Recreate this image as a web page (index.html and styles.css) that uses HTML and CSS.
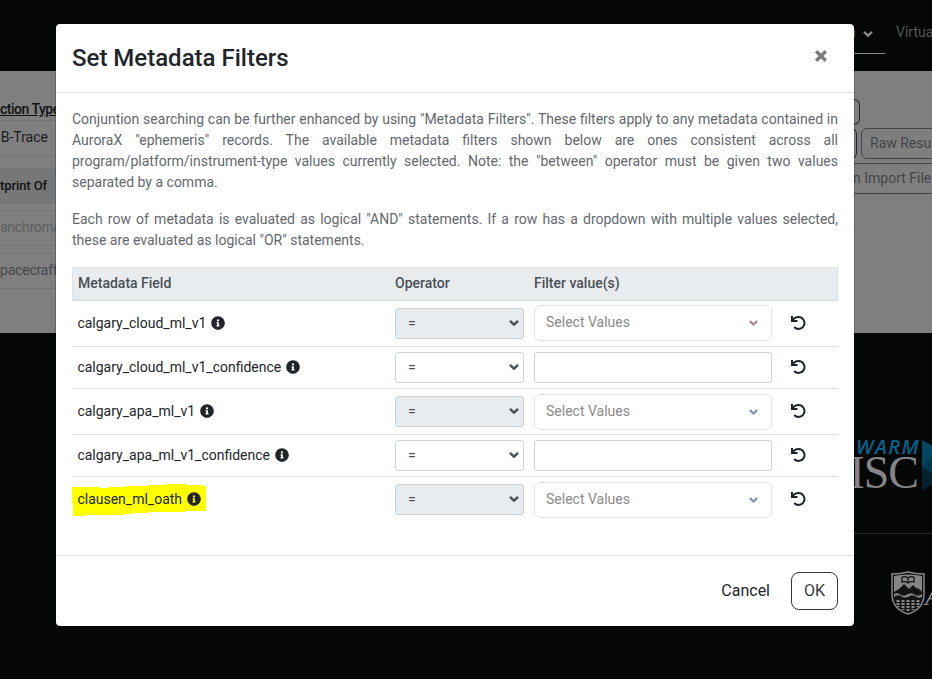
FILE: index.html
```html
<!DOCTYPE html>
<html lang="en">
<head>
<meta charset="utf-8">
<title>Set Metadata Filters</title>
<link rel="stylesheet" href="styles.css">
</head>
<body>
<svg width="0" height="0" class="defs">
  <symbol id="info" viewBox="0 0 512 512"><path fill="currentColor" d="M256 8C119 8 8 119 8 256s111 248 248 248 248-111 248-248S393 8 256 8zm0 110a42 42 0 1 1 0 84 42 42 0 0 1 0-84zm56 254c0 7-5 12-12 12h-88c-7 0-12-5-12-12v-24c0-7 5-12 12-12h12v-64h-12c-7 0-12-5-12-12v-24c0-7 5-12 12-12h64c7 0 12 5 12 12v100h12c7 0 12 5 12 12z"/></symbol>
  <symbol id="undo" viewBox="0 0 15 14"><path fill="none" stroke="currentColor" stroke-width="2" d="M1 0v5h5.500M1.400 4.700C3 2.200 5 1.100 7.500 1.100a5.900 5.900 0 1 1-4.300 9.900"/></symbol>
  <symbol id="chev" viewBox="0 0 10 6"><path fill="none" stroke="currentColor" stroke-width="2.400" d="M1 .9l4 3.800 4-3.800"/></symbol>
</svg>
<div class="page">
  <header class="nav">
    <div class="nav-active"><span>n</span><svg class="nav-chev"><use href="#chev"/></svg></div>
    <span class="nav-item">Virtua</span>
  </header>
  <main class="main">
    <div class="left">
      <div class="l-head">ction Type</div>
      <div class="l-trace">B-Trace</div>
      <div class="l-foot">tprint Of</div>
      <div class="l-pan">anchroma</div>
      <div class="l-space">pacecraft</div>
    </div>
    <div class="right">
      <div class="btn b1"></div>
      <div class="btn-row"><div class="btn b2"></div><div class="btn b3">Raw Resu</div></div>
      <div class="btn b4">n Import File</div>
    </div>
  </main>
  <footer class="footer">
    <div class="logos">
      <div class="swarm"><span class="warm">WARM</span><span class="disc">ISC</span></div>
      <svg class="tri" viewBox="0 0 20 50"><path fill="#044661" d="M0 0l20 11v17L0 49z"/><path fill="#03374c" d="M0 27l9-10 11 9v9z"/><path fill="#04212d" d="M0 27l20 10v3L0 50z"/></svg>
    </div>
    <div class="sponsor">
      <svg class="shield" viewBox="0 0 34 44"><path fill="#111413" stroke="#858585" stroke-width="1.500" d="M1 3Q9 3 17 1q8 2 16 2v20q0 15-16 20Q1 38 1 23z"/><path fill="#858585" d="M3 5q14-3 28 0v16q-3-4-6-4l-3-3-4 4-5-5-5 5-5 3z"/><path fill="#858585" d="M3 23q4-2 7 1 3 2 7-1 4-2 7 1 3 2 7-1v3q-4 2-7-1-3-2-7 1-4 2-7-1-3-2-7 1z"/><path fill="#858585" stroke="#111413" stroke-width="1.300" d="M11 6q3-1 6 1 3-2 6-1v5q-3-1-6 1-3-2-6-1zM17 7v5"/><path fill="none" stroke="#858585" stroke-width="3" stroke-dasharray="2 1" d="M7 29v7M12 29v10M17 29v12M22 29v10M27 29v7"/></svg>
      <span class="alberta">A</span>
    </div>
  </footer>
</div>

<div class="modal">
  <div class="m-head"><h1>Set Metadata Filters</h1>
    <svg class="close" viewBox="0 0 12 12"><path stroke="#7b7b7b" stroke-width="3.400" d="M1.200 1.200l9.600 9.600M10.800 1.200l-9.600 9.600"/></svg></div>
  <div class="m-body">
    <p>Conjuntion searching can be further enhanced by using "Metadata Filters". These filters apply to any metadata contained in AuroraX "ephemeris" records. The available metadata filters shown below are ones consistent across all program/platform/instrument-type values currently selected. Note: the "between" operator must be given two values separated by a comma.</p>
    <p>Each row of metadata is evaluated as logical "AND" statements. If a row has a dropdown with multiple values selected, these are evaluated as logical "OR" statements.</p>
    <div class="table">
      <div class="row thead"><span>Metadata Field</span><span>Operator</span><span>Filter value(s)</span></div>
      <div class="row tall"><div class="name">calgary_cloud_ml_v1<svg class="info"><use href="#info"/></svg></div><div class="op off">=<svg class="chev"><use href="#chev"/></svg></div><div class="multi first">Select Values<svg class="chev"><use href="#chev"/></svg></div><svg class="undo"><use href="#undo"/></svg></div>
      <div class="row"><div class="name">calgary_cloud_ml_v1_confidence<svg class="info"><use href="#info"/></svg></div><div class="op">=<svg class="chev"><use href="#chev"/></svg></div><div class="input"></div><svg class="undo"><use href="#undo"/></svg></div>
      <div class="row tall"><div class="name">calgary_apa_ml_v1<svg class="info"><use href="#info"/></svg></div><div class="op off">=<svg class="chev"><use href="#chev"/></svg></div><div class="multi">Select Values<svg class="chev"><use href="#chev"/></svg></div><svg class="undo"><use href="#undo"/></svg></div>
      <div class="row"><div class="name">calgary_apa_ml_v1_confidence<svg class="info"><use href="#info"/></svg></div><div class="op">=<svg class="chev"><use href="#chev"/></svg></div><div class="input"></div><svg class="undo"><use href="#undo"/></svg></div>
      <div class="row tall"><div class="name"><svg class="marker" viewBox="0 0 134 32"><path fill="#ff0" d="M0 3h28v1h8V3h18V2h22V1h17V0h21v1h17v1h3v25h-21v1H75v1H61v1h-9v1H14v1H1V19H0z"/></svg><span>clausen_ml_oath</span><svg class="info"><use href="#info"/></svg></div><div class="op off">=<svg class="chev"><use href="#chev"/></svg></div><div class="multi">Select Values<svg class="chev"><use href="#chev"/></svg></div><svg class="undo"><use href="#undo"/></svg></div>
    </div>
  </div>
  <div class="m-foot"><span class="cancel">Cancel</span><span class="ok">OK</span></div>
</div>
</body>
</html>
```
FILE: styles.css
```css
* { box-sizing: border-box; }
body { margin: 0; width: 932px; height: 679px; overflow: hidden; font-family: Roboto, "Liberation Sans", sans-serif; font-size: 14px; line-height: 21px; color: #212529; }
svg { display: block; flex: none; }
.defs { position: absolute; }
.page { height: 679px; overflow: hidden; background: #050706; }
.nav { height: 71px; display: flex; justify-content: flex-end; padding-top: 22px; white-space: nowrap; color: #555; }
.nav-active { width: 45px; height: 32px; border-bottom: 1px solid #858585; display: flex; padding: 0 12px 0 8px; justify-content: space-between; color: #858585; }
.nav-active span { color: #94692c; }
.nav-chev { width: 10px; height: 6px; margin-top: 9px; }
.nav-item { width: 36px; margin-left: 11px; }
.main { height: 262px; background: #7f7f7f; display: flex; justify-content: space-between; white-space: nowrap; }
.left { width: 57px; padding-top: 28px; }
.left div { display: flex; justify-content: flex-end; align-items: center; padding-bottom: 2px; border-bottom: 1px solid #707273; }
.left .l-head { height: 22px; padding-bottom: 0; justify-content: flex-start; font-weight: 500; text-decoration: underline; letter-spacing: -.5px; color: #111315; }
.left .l-trace { height: 35px; padding-right: 9px; color: #191b1d; }
.left .l-foot { height: 35px; margin-top: 12px; padding-right: 10px; padding-bottom: 0; font-size: 13px; font-weight: 500; letter-spacing: -.1px; color: #111315; background: #767778; border-top: 1px solid #707273; }
.left .l-pan { height: 36px; margin-top: 7px; border-top: 1px solid #777; border-bottom-color: #777; justify-content: flex-start; letter-spacing: -.25px; color: #5c5e60; }
.left .l-space { height: 36px; margin-top: 7px; justify-content: flex-start; letter-spacing: -.2px; border-top: 1px solid #707273; color: #45484a; }
.right { width: 82px; padding-top: 28px; }
.btn { border: 1px solid #25282b; border-radius: 6px; color: #42464a; display: flex; align-items: center; }
.b1 { width: 10px; height: 26px; border-left: 0; border-radius: 0 6px 6px 0; }
.btn-row { display: flex; margin-top: 3px; gap: 4px; }
.b2 { flex: none; width: 7px; height: 31px; border-left: 0; border-radius: 0 6px 6px 0; }
.b3 { width: 100px; flex: none; height: 31px; padding-left: 8px; border-color: #42464a; }
.b4 { width: 100px; height: 31px; margin-top: 4px; padding-left: 2px; border-color: #42464a; border-radius: 0; }
.footer { padding-top: 105px; display: flex; flex-direction: column; align-items: flex-end; }
.logos { display: flex; justify-content: flex-end; width: 82px; height: 96px; border-bottom: 1px solid #262827; margin-bottom: 37px; }
.swarm { flex: none; width: 75px; height: 60px; display: flex; flex-direction: column; align-items: flex-end; }
.warm { font: italic 600 20px/17px "Open Sans", sans-serif; color: #04618a; letter-spacing: 1.4px; margin-right: -2px; }
.disc { font: 46px/36px "Liberation Serif", serif; color: #858585; letter-spacing: -1px; }
.tri { width: 20px; height: 50px; margin-left: 4px; margin-right: -10px; margin-top: 2px; }
.sponsor { display: flex; justify-content: flex-end; height: 44px; }
.shield { width: 34px; height: 44px; }
.alberta { width: 7px; font: italic 28px/50px "Liberation Serif", serif; color: #858585; }

.modal { position: absolute; left: 55px; top: 23px; width: 800px; height: 604px; background: #fff; background-clip: padding-box; border: 1px solid rgba(0,0,0,.2); border-radius: 5px; display: flex; flex-direction: column; }
.m-head { height: 69px; padding: 0 27px 0 16px; display: flex; justify-content: space-between; align-items: center; border-bottom: 1px solid #dee2e6; }
h1 { margin: 0; font-size: 24px; font-weight: 500; line-height: 36px; }
.close { width: 12px; height: 12px; margin-top: -4px; }
.m-body { flex: 1; padding: 16px 16px 0; }
p { margin: 0 0 16px; text-align: justify; color: #63686e; }
.table { width: 766px; }
.row { display: grid; grid-template-columns: 317px 139px 257px 15px; padding-left: 6px; align-items: center; height: 42px; border-bottom: 1px solid #dee2e6; }
.row.tall { height: 46px; }
.row:last-child { border-bottom: 0; height: 45px; }
.row.thead { height: 34px; background: #e9ecef; border: 1px solid #dee2e6; border-bottom-width: 2px; padding-left: 5px; color: #495057; font-weight: 500; }
.name { display: flex; align-items: center; position: relative; white-space: nowrap; margin-left: -.6px; }
.name span { position: relative; }
.marker { position: absolute; left: -5.4px; top: -5px; width: 134px; height: 32px; }
.info { width: 14px; height: 14px; margin: -1px 0 0 4.8px; position: relative; }
.op { width: 129px; height: 31px; border: 1px solid #ced4da; border-radius: 3px; padding: 0 4px 0 12px; display: flex; align-items: center; justify-content: space-between; font-size: 14px; color: #495057; }
.off { background: #e9ecef; }
.op .chev { color: #495057; margin-top: -1px; }
.chev { width: 10px; height: 6px; }
.multi { width: 238px; height: 36px; border: 1px solid #e4e6e9; border-radius: 6px; padding: 0 13px 1px 11px; display: flex; align-items: center; justify-content: space-between; color: #8a8a8a; }
.multi.first { margin-top: -1px; }
.multi .chev { width: 9px; color: #8593a3; margin-top: 1px; }
.multi.first .chev { color: #a28791; }
.input { width: 238px; height: 31px; border: 1px solid #ced4da; border-radius: 3px; }
.undo { width: 15px; height: 14px; margin-top: -2px; }
.m-foot { height: 71px; border-top: 1px solid #dee2e6; padding: 0 16px; display: flex; align-items: center; justify-content: flex-end; font-size: 16px; }
.cancel { margin-top: -1px; }
.ok { width: 47px; height: 38px; margin-left: 21px; border: 1px solid #343a40; border-radius: 8px; line-height: 36px; text-align: center; color: #343a40; }
```
